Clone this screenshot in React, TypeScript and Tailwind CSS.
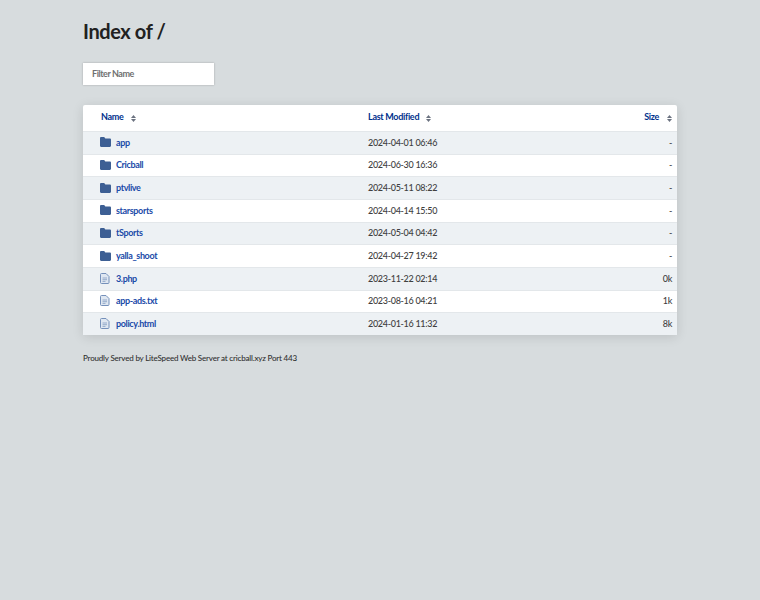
const rows = [
  { name: "app", date: "2024-04-01 06:46", size: "-", dir: true },
  { name: "Cricball", date: "2024-06-30 16:36", size: "-", dir: true },
  { name: "ptvlive", date: "2024-05-11 08:22", size: "-", dir: true },
  { name: "starsports", date: "2024-04-14 15:50", size: "-", dir: true },
  { name: "tSports", date: "2024-05-04 04:42", size: "-", dir: true },
  { name: "yalla_shoot", date: "2024-04-27 19:42", size: "-", dir: true },
  { name: "3.php", date: "2023-11-22 02:14", size: "0k", dir: false },
  { name: "app-ads.txt", date: "2023-08-16 04:21", size: "1k", dir: false },
  { name: "policy.html", date: "2024-01-16 11:32", size: "8k", dir: false },
];

function FolderIcon() {
  return (
    <svg className="w-[11px] h-[10px] shrink-0" viewBox="0 0 11 10">
      <path
        d="M0 1.2C0 .5.5 0 1.2 0h2.6c.4 0 .7.2.9.5l.6.9h4.5c.7 0 1.2.5 1.2 1.2v6.2c0 .7-.5 1.2-1.2 1.2H1.2C.5 10 0 9.500 0 8.800z"
        fill="#3d5f94"
      />
    </svg>
  );
}

function FileIcon() {
  return (
    <svg className="w-[10px] h-[11px] shrink-0" viewBox="0 0 10 11" fill="none">
      <path
        d="M1.5.5h4.500L9 3.500v6a1 1 0 0 1-1 1H1.500a1 1 0 0 1-1-1v-8a1 1 0 0 1 1-1z"
        fill="#dfe7f1"
        stroke="#7590ba"
      />
      <path d="M2.500 5h4.500M2.500 6.700h4.500M2.500 8.400h3" stroke="#7590ba" strokeWidth="0.7" />
    </svg>
  );
}

function SortIcon() {
  return (
    <svg className="w-[5px] h-[7px] shrink-0 mt-[2px]" viewBox="0 0 5 7">
      <path d="M2.500 0L5 3H0z" fill="#6b7280" />
      <path d="M2.500 7L0 4h5z" fill="#6b7280" />
    </svg>
  );
}

export default function App() {
  return (
    <div className="min-h-[600px] bg-[#d7dcde] px-[83px] font-['Lato','Liberation_Sans',sans-serif] text-[#404040]">
      <h1 className="pt-[18px] text-[20px] leading-[26px] font-bold tracking-[-0.4px] text-[#212121]">Index of /</h1>

      <input
        placeholder="Filter Name"
        className="mt-[19px] block w-[131px] h-[22px] bg-white px-[9px] pb-px text-[9px] font-bold tracking-[-0.45px] shadow-[0_0_2px_rgba(0,0,0,0.25)] outline-none placeholder:text-[#707070]"
      />

      <div className="mt-[20px] w-[594px] bg-white rounded-[2px] shadow-[0_2px_12px_rgba(0,0,0,0.12)]">
        {/* Header */}
        <div className="flex items-center h-[26px] pb-[2px] text-[9px] font-bold tracking-[-0.3px] text-[#00318c]">
          <div className="w-[285px] pl-[18px] flex items-center gap-[7px]">
            <span>Name</span>
            <SortIcon />
          </div>
          <div className="flex-1 flex items-center gap-[7px]">
            <span>Last Modified</span>
            <SortIcon />
          </div>
          <div className="pr-[5px] flex items-center gap-[8px]">
            <span>Size</span>
            <SortIcon />
          </div>
        </div>

        {/* Rows */}
        {rows.map((row, i) => (
          <div
            key={row.name}
            className={`flex items-center h-[22.670px] pb-px border-t border-[#e3e7ea] text-[9px] tracking-[-0.3px] ${
              i % 2 === 0 ? "bg-[#edf1f4]" : "bg-white"
            }`}
          >
            <div className="w-[285px] pl-[17px] flex items-center">
              <span className="w-[16px] flex">{row.dir ? <FolderIcon /> : <FileIcon />}</span>
              <span className="font-bold tracking-[-0.36px] text-[#1a4aa8]">{row.name}</span>
            </div>
            <div className="flex-1 font-medium text-[#3f3f3f]">{row.date}</div>
            <div className="pr-[5px] font-medium text-[#3f3f3f]">{row.size}</div>
          </div>
        ))}
      </div>

      <p className="mt-[17px] text-[8px] leading-[12px] font-medium tracking-[-0.19px] text-[#303030]">
        Proudly Served by LiteSpeed Web Server at cricball.xyz Port 443
      </p>
    </div>
  );
}
